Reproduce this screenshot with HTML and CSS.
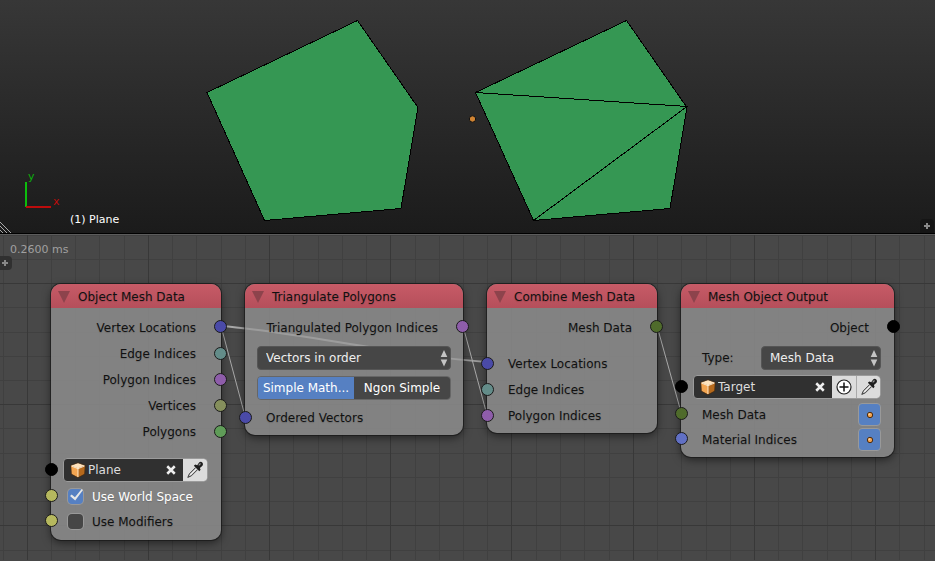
FILE: index.html
```html
<!DOCTYPE html>
<html lang="en">
<head>
<meta charset="utf-8">
<title>Mesh nodes</title>
<link rel="stylesheet" href="styles.css">
</head>
<body>
<svg class="defs" aria-hidden="true">
  <symbol id="cube" viewBox="0 0 16 16">
    <path fill="#ffe3bd" d="M8 1 15 3.500 8 6.500 1 3.500Z"/>
    <path fill="#f3a551" d="M1 3.500 8 6.500V15.500L1.500 12Z"/>
    <path fill="#b5691c" d="M15 3.500 8 6.500V15.500L14.500 12Z"/>
    <path fill="none" stroke="#4b2b0d" stroke-width=".6" d="M8 .7 15.300 3.400 14.700 12.200 8 15.700 1.300 12.200.7 3.400Z"/>
    <path fill="none" stroke="#fff0da" stroke-width=".9" d="M1.500 4 8 6.700 14.500 4M8 6.700V15"/>
  </symbol>
  <symbol id="cross" viewBox="0 0 12 12">
    <path stroke="#eee" stroke-width="3" d="m1.500 1.500 9 9m0-9-9 9"/>
  </symbol>
  <symbol id="dropper" viewBox="0 0 18 18">
    <path fill="#c9c9c9" stroke="#2a2a2a" stroke-width=".9" stroke-linejoin="round" d="M9.600 6.600 3.400 12.800 1.800 16.400 5.400 14.800 11.600 8.600"/>
    <path stroke="#fff" stroke-width=".9" d="m4 14.200 6.300-6.300"/>
    <path fill="#1e1e1e" d="m7.800 4.700 1.500-1.200 1.900.7 1.900-2.700Q14.800.2 16.300 1.500 17.700 3 16.500 4.700L13.900 6.900l.7 1.800-1.300 1.500Z"/>
    <path stroke="#999" stroke-width="1.200" d="m12.700 4.300 1.800-1.800"/>
  </symbol>
  <symbol id="plus" viewBox="0 0 18 18">
    <circle cx="9" cy="9" r="7" fill="#fff" stroke="#222" stroke-width="1.200"/>
    <path stroke="#111" stroke-width="1.500" d="M9 4.500v9M4.500 9h9"/>
  </symbol>
  <symbol id="arrows" viewBox="0 0 8 18">
    <path fill="#c4c4c4" d="M4 1 7.300 8H.7ZM.7 10.500h6.600L4 17.500Z"/>
  </symbol>
  <symbol id="dot" viewBox="0 0 8 8">
    <circle cx="4" cy="4" r="2.700" fill="#f0a04c" stroke="#4a2b12"/>
    <circle cx="3.400" cy="3.300" r="1" fill="#ffd39a"/>
  </symbol>
</svg>

<main class="screen">
  <section class="viewport" aria-label="3D view">
    <svg class="scene" aria-hidden="true">
      <g class="mesh" shape-rendering="crispEdges">
        <path d="M207 92.500 357.500 20.500 418 107.500 401 208.500 264.500 220.500Z"/>
        <path d="M475.500 92.500 626.500 20.500 687 107.500 670 208.500 533.500 220.500Z"/>
        <path d="M475.500 92.500 687 106.500 533.500 220.500"/>
      </g>
      <circle class="origin" cx="472.500" cy="119" r="3.200"/>
      <path class="axis-y" d="M26 182v25"/>
      <path class="axis-x" d="M26 207h25"/>
      <text class="label-y" x="28" y="180">y</text>
      <text class="label-x" x="53" y="205">x</text>
      <path class="corner" d="m0 222 11 11M0 226l7 7M0 230l3 3"/>
    </svg>
    <p class="object-name">(1) Plane</p>
    <button class="expand expand-view" aria-label="Open properties"></button>
  </section>

  <section class="editor" aria-label="Node editor">
    <svg class="canvas" aria-hidden="true">
      <path class="minor" d="M3.500 0v400M51.500 0v400M75.500 0v400M99.500 0v400M124.500 0v400M172.500 0v400M196.500 0v400M221.500 0v400M245.500 0v400M293.500 0v400M318.500 0v400M342.500 0v400M366.500 0v400M415.500 0v400M439.500 0v400M463.500 0v400M487.500 0v400M536.500 0v400M560.500 0v400M584.500 0v400M609.500 0v400M657.500 0v400M681.500 0v400M706.500 0v400M730.500 0v400M778.500 0v400M802.500 0v400M827.500 0v400M851.500 0v400M899.500 0v400M924.500 0v400M0 1.500h2000M0 25.500h2000M0 73.500h2000M0 98.500h2000M0 122.500h2000M0 146.500h2000M0 194.500h2000M0 219.500h2000M0 243.500h2000M0 267.500h2000M0 316.500h2000"/>
      <path class="major" d="M27.500 0v400M148.500 0v400M269.500 0v400M390.500 0v400M511.500 0v400M633.500 0v400M754.500 0v400M875.500 0v400M0 49.500h2000M0 170.500h2000M0 291.500h2000"/>
      <linearGradient id="fade" gradientUnits="userSpaceOnUse" x1="221" y1="0" x2="487" y2="0">
        <stop offset=".09" stop-color="#a8a8a8"/>
        <stop offset=".1" stop-color="#fff"/>
        <stop offset=".9" stop-color="#fff"/>
        <stop offset=".91" stop-color="#999"/>
      </linearGradient>
      <g class="links">
        <path class="long" d="M221 92C290 97 400 122 487 128"/>
        <path d="M221 92 245 182"/>
        <path d="M463 92 487 181"/>
        <path d="M657 92 681 178"/>
      </g>
    </svg>
    <p class="timing">0.2600 ms</p>
    <button class="expand expand-tools" aria-label="Open tools"></button>

    <article class="node node-source">
      <h2>Object Mesh Data</h2>
      <ul class="sockets outputs">
        <li>Vertex Locations<i class="socket blue"></i></li>
        <li>Edge Indices<i class="socket teal"></i></li>
        <li>Polygon Indices<i class="socket purple"></i></li>
        <li>Vertices<i class="socket olive"></i></li>
        <li>Polygons<i class="socket green"></i></li>
      </ul>
      <div class="row picker-row">
        <i class="socket black"></i>
        <div class="picker">
          <svg class="cube"><use href="#cube"/></svg>
          <input type="text" value="Plane" aria-label="Object">
          <button class="clear" aria-label="Clear"><svg><use href="#cross"/></svg></button>
          <button class="tool" aria-label="Pick object"><svg><use href="#dropper"/></svg></button>
        </div>
      </div>
      <label class="row check on"><i class="socket yellow"></i><input type="checkbox" checked>Use World Space</label>
      <label class="row check"><i class="socket yellow"></i><input type="checkbox">Use Modifiers</label>
    </article>

    <article class="node node-triangulate">
      <h2>Triangulate Polygons</h2>
      <ul class="sockets outputs">
        <li>Triangulated Polygon Indices<i class="socket purple"></i></li>
      </ul>
      <div class="select">
        <select aria-label="Input mode"><option>Vectors in order</option></select>
        <svg><use href="#arrows"/></svg>
      </div>
      <div class="toggle">
        <button class="active" aria-pressed="true">Simple Math...</button>
        <button aria-pressed="false">Ngon Simple</button>
      </div>
      <ul class="sockets inputs">
        <li><i class="socket blue"></i>Ordered Vectors</li>
      </ul>
    </article>

    <article class="node node-combine">
      <h2>Combine Mesh Data</h2>
      <ul class="sockets outputs">
        <li>Mesh Data<i class="socket moss"></i></li>
      </ul>
      <ul class="sockets inputs">
        <li><i class="socket blue"></i>Vertex Locations</li>
        <li><i class="socket teal"></i>Edge Indices</li>
        <li><i class="socket purple"></i>Polygon Indices</li>
      </ul>
    </article>

    <article class="node node-output">
      <h2>Mesh Object Output</h2>
      <ul class="sockets outputs">
        <li>Object<i class="socket black"></i></li>
      </ul>
      <div class="type-row">
        <label for="type">Type:</label>
        <div class="select">
          <select id="type"><option>Mesh Data</option></select>
          <svg><use href="#arrows"/></svg>
        </div>
      </div>
      <div class="row picker-row">
        <i class="socket black"></i>
        <div class="picker">
          <svg class="cube"><use href="#cube"/></svg>
          <input type="text" value="Target" aria-label="Target object">
          <button class="clear" aria-label="Clear"><svg><use href="#cross"/></svg></button>
          <button class="tool" aria-label="New object"><svg><use href="#plus"/></svg></button>
          <button class="tool" aria-label="Pick object"><svg><use href="#dropper"/></svg></button>
        </div>
      </div>
      <div class="row option"><i class="socket moss"></i>Mesh Data<button aria-label="Use mesh data" aria-pressed="true"><svg><use href="#dot"/></svg></button></div>
      <div class="row option"><i class="socket indigo"></i>Material Indices<button aria-label="Use material indices" aria-pressed="true"><svg><use href="#dot"/></svg></button></div>
    </article>
  </section>
</main>
</body>
</html>
```
FILE: styles.css
```css
* { box-sizing: border-box; }

body {
  margin: 0;
  background: #474747;
  color: #111;
  font: 12px/18px "DejaVu Sans", sans-serif;
}

button, input, select { font: inherit; color: inherit; }
button { border: 0; padding: 0; }
.defs { position: absolute; width: 0; height: 0; }

.screen {
  display: grid;
  grid-template-rows: 234px 1fr;
  min-height: 100vh;
}

/* 3D view */
.viewport {
  position: relative;
  overflow: hidden;
  border-bottom: 1px solid #000;
  background: linear-gradient(#373737, #1b1b1b);
}
.scene, .canvas { position: absolute; inset: 0; width: 100%; height: 100%; }
.mesh path { fill: #359753; stroke: #000; }
.mesh path:last-child { fill: none; }
.origin { fill: #d08433; stroke: #111; }
.axis-y { stroke: #0cbd0c; stroke-width: 2; }
.axis-x { stroke: #bd0c0c; stroke-width: 2; }
.label-y { fill: #0cae0c; font-size: 11px; }
.label-x { fill: #bd0c0c; font-size: 11px; }
.corner { fill: none; stroke: #aaa; }
.object-name {
  position: absolute;
  left: 70px;
  bottom: 4px;
  margin: 0;
  color: #fff;
  font-size: 11px;
}

.expand {
  position: absolute;
  width: 14px;
  height: 14px;
  background:
    linear-gradient(#888, #888) center / 6px 2px no-repeat,
    linear-gradient(#888, #888) center / 2px 6px no-repeat,
    #303030;
}
.expand-view { right: 1px; bottom: 0; border-radius: 4px 4px 0 0; background-color: #151515; }
.expand-tools { left: -2px; top: 21px; border-radius: 0 4px 4px 0; }

/* Node editor */
.editor { position: relative; overflow: hidden; border-top: 1px solid #5c5c5c; background: #484848; }
.canvas { top: -1px; }
.minor { stroke: #404040; }
.major { stroke: #383838; }
.links { fill: none; stroke: #a8a8a8; stroke-width: 1; }
.links .long { stroke: url(#fade); stroke-width: 2; }
.timing { position: absolute; left: 10px; top: 6px; margin: 0; color: #a0a0a0; font-size: 11px; }

.node {
  position: absolute;
  top: 49px;
  padding-bottom: 4px;
  border-radius: 10px;
  background: rgba(140, 140, 140, .86);
  box-shadow: 0 0 0 1px rgba(20, 20, 20, .6), 0 3px 8px rgba(0, 0, 0, .5);
  text-shadow: 0 1px 1px rgba(0, 0, 0, .15);
}
.node-source { left: 51px; width: 170px; padding-bottom: 6px; }
.node-triangulate { left: 245px; width: 218px; }
.node-combine { left: 487px; width: 170px; }
.node-output { left: 681px; width: 213px; padding-bottom: 5px; }

.node h2 {
  display: flex;
  align-items: center;
  gap: 8px;
  height: 24px;
  margin: 0 0 6px;
  padding: 2px 7px 0;
  border-radius: 10px 10px 0 0;
  background: linear-gradient(#c75b67, #b54f5b);
  font-size: 12px;
  font-weight: 400;
  white-space: nowrap;
}
.node h2::before {
  content: "";
  width: 12px;
  height: 12px;
  background: #8d434c;
  clip-path: polygon(0 0, 100% 0, 50% 100%);
}

.sockets { list-style: none; margin: 0; padding: 0; }
.sockets li, .row { position: relative; display: flex; align-items: center; white-space: nowrap; }
.sockets li { height: 26px; }
.outputs li { justify-content: flex-end; padding-right: 25px; }
.outputs li:first-child { height: 27px; }
.inputs li { padding-left: 21px; }

.socket {
  position: absolute;
  left: -6px;
  width: 13px;
  height: 13px;
  margin-bottom: 2px;
  border: 1px solid #1a1a1a;
  border-radius: 50%;
}
.outputs .socket { left: auto; right: -6px; }
.blue { background: #4a4aa8; }
.teal { background: #638c89; }
.purple { background: #8e5daa; }
.olive { background: #858f5c; }
.green { background: #5f9c58; }
.yellow { background: #b6b85e; }
.moss { background: #4f6b2b; }
.indigo { background: #6170c4; }
.black { background: #000; border-color: #000; }

.picker {
  display: flex;
  flex: 1;
  height: 24px;
  overflow: hidden;
  border: 1px solid #9b9b9b;
  border-radius: 4px;
  background: #303030;
  color: #ddd;
}
.picker-row { padding: 0 13px 0 12px; }
.picker .cube { flex: none; width: 16px; height: 16px; margin: 3px 2px 0 6px; }
.picker input { flex: 1; min-width: 0; padding: 0; border: 0; outline: 0; background: none; }
.clear { width: 24px; background: none; }
.clear svg { display: block; width: 10px; height: 10px; margin: auto; }
.tool { width: 24px; background: #dcdcdc; }
.tool + .tool { border-left: 1px solid #aaa; }
.tool svg { display: block; width: 18px; height: 18px; margin: auto; }

.check { height: 25px; padding-left: 17px; gap: 9px; }
.check.on { color: #fff; }
.check input {
  appearance: none;
  width: 15px;
  height: 15px;
  margin: 0;
  border-radius: 4px;
  background: #464646;
  box-shadow: 0 0 0 1px #999;
}
.check input:checked {
  position: relative;
  background: #5680c2;
}
.check input:checked::after {
  content: "";
  position: absolute;
  left: 2px;
  top: 0;
  width: 13px;
  height: 12px;
  background: #e6e6e6;
  clip-path: polygon(0 58%, 13% 46%, 38% 68%, 90% 0, 100% 8%, 40% 96%);
}

.select { position: relative; display: flex; height: 24px; }
.select select {
  appearance: none;
  flex: 1;
  min-width: 0;
  padding: 0 8px;
  border: 1px solid #555;
  border-radius: 4px;
  background: #464646;
  color: #eee;
}
.select svg { position: absolute; right: 3px; top: 3px; width: 8px; height: 18px; pointer-events: none; }

.toggle { display: flex; height: 24px; overflow: hidden; border: 1px solid #666; border-radius: 4px; }
.toggle button { flex: 1; background: #464646; color: #fff; white-space: nowrap; }
.toggle .active { background: #5680c2; }

.node-triangulate .select { margin: 5px 12px 6px; }
.node-triangulate .toggle { margin: 0 12px 5px; }
.node-combine .inputs { margin-top: 10px; }
.node-source .picker-row { margin: 13px 0 2px; }
.node-output .picker-row { margin-bottom: 3px; }
.type-row { display: flex; align-items: center; justify-content: space-between; margin: 5px 13px; padding-left: 8px; }
.type-row .select { width: 120px; }

.option { height: 25px; padding: 0 13px 0 21px; }
.option button {
  width: 23px;
  height: 23px;
  margin-left: auto;
  border: 1px solid #999;
  border-radius: 4px;
  background: #5680c2;
}
.option svg { display: block; width: 8px; height: 8px; margin: auto; }
```
